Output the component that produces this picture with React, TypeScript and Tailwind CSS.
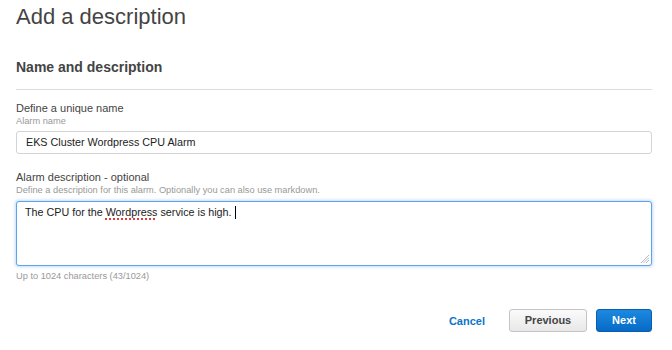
import React from "react";

export default function App() {
  return (
    <div className="w-[672px] h-[350px] bg-white pl-4 pr-5 pt-[3px] font-['Liberation_Sans',Arial,sans-serif] overflow-hidden">
      <h1 className="text-[22px] leading-[28px] text-[#444] font-normal">Add a description</h1>
      <h2 className="mt-[26px] text-[14px] leading-[20px] font-bold text-[#444]">Name and description</h2>
      <div className="mt-[12px] border-t border-[#dcdcdc]" />

      <div className="mt-[11px] text-[11px] leading-[14px] text-[#444]">Define a unique name</div>
      <div className="text-[9.25px] leading-[12px] text-[#999]">Alarm name</div>
      <div className="mt-[4px] h-[23px] rounded-[3px] border border-[#d4d4d4] bg-white pl-[9px] text-[10.75px] leading-[21px] text-[#222]">
        EKS Cluster Wordpress CPU Alarm
      </div>

      <div className="mt-[16px] text-[11px] leading-[14px] text-[#444]">Alarm description - optional</div>
      <div className="text-[9.25px] leading-[12px] text-[#999]">
        Define a description for this alarm. Optionally you can also use markdown.
      </div>
      <div className="relative mt-[5px] h-[65px] rounded-[3px] border border-[#5ea3ec] bg-white pl-[8px] pt-[3px] shadow-[0_0_3px_1px_rgba(120,175,240,0.45)] text-[10.75px] leading-[14px] text-[#222]">
        <span>
          The CPU for the{" "}
          <span className="underline decoration-dotted decoration-[#e23b3b] decoration-[1.5px] underline-offset-[2px]">Wordpress</span>{" "}
          service is high.
        </span>
        <span className="inline-block ml-[3px] w-px h-[13px] bg-black align-[-3px]" />
        <svg className="absolute right-[1px] bottom-[1px]" width="10" height="10" viewBox="0 0 10 10">
          <line x1="9" y1="1" x2="1" y2="9" stroke="#aaa" strokeWidth="0.8" />
          <line x1="9" y1="3.5" x2="3.5" y2="9" stroke="#aaa" strokeWidth="0.8" />
          <line x1="9" y1="6" x2="6" y2="9" stroke="#aaa" strokeWidth="0.8" />
        </svg>
      </div>
      <div className="mt-[4px] text-[9.25px] leading-[12px] text-[#999]">Up to 1024 characters (43/1024)</div>

      <div className="mt-[27px] flex items-center justify-end">
        <button className="text-[11px] font-bold text-[#0b73c9] mr-[24px] leading-[14px]">Cancel</button>
        <button className="w-[78px] h-[23px] rounded-[3px] border border-[#c4c4c4] bg-linear-to-b from-[#fbfbfb] to-[#e8e8e8] text-[11px] font-bold text-[#444] leading-[21px]">
          Previous
        </button>
        <button className="ml-[9px] w-[56px] h-[23px] rounded-[3px] border border-[#0a5cae] bg-linear-to-b from-[#1c89e0] to-[#066bc7] text-[11px] font-bold text-white leading-[21px]">
          Next
        </button>
      </div>
    </div>
  );
}
